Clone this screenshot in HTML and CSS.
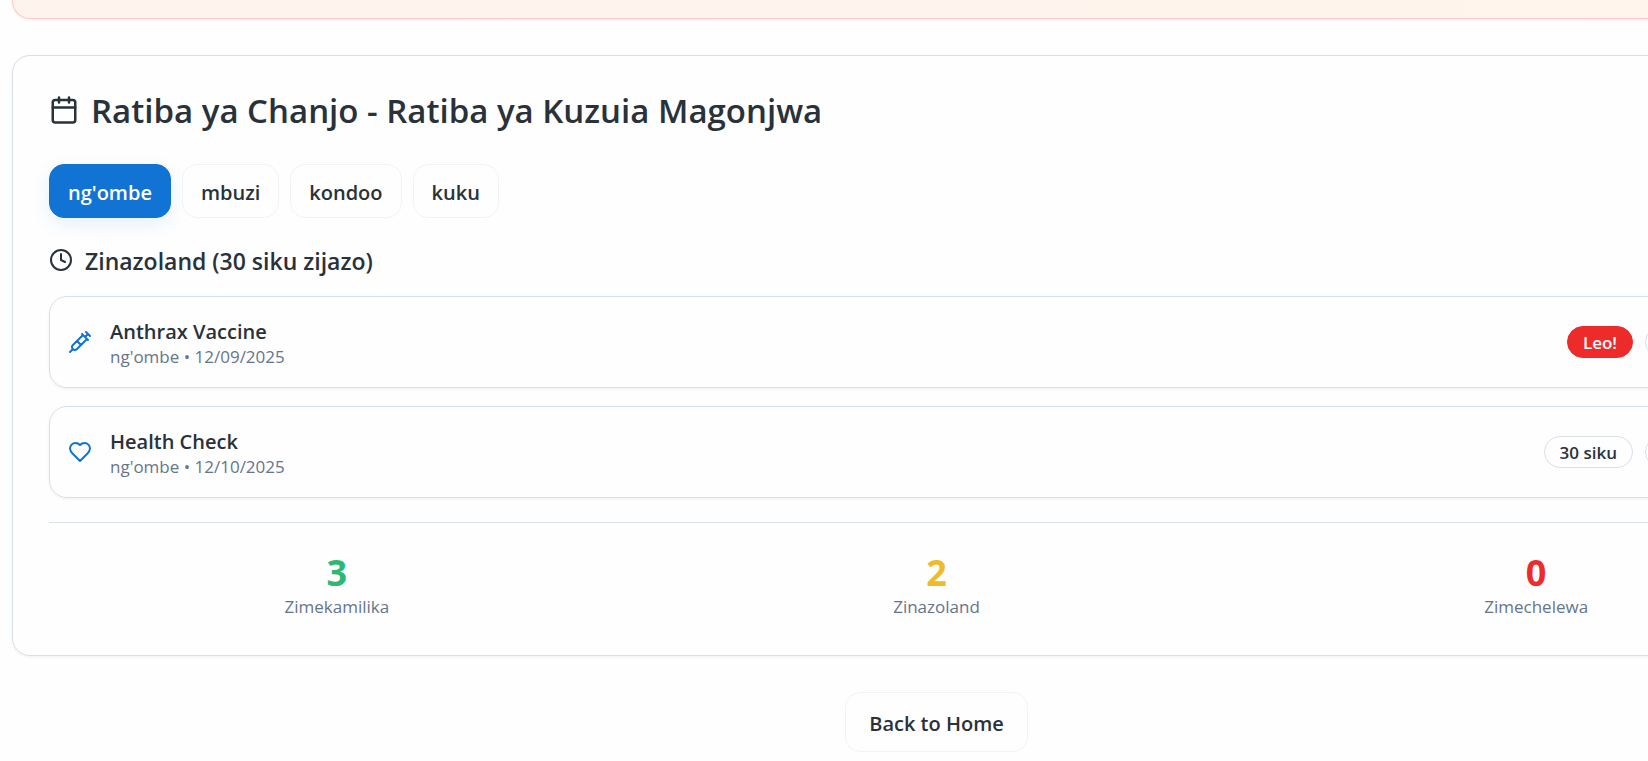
FILE: index.html
```html
<!DOCTYPE html>
<html lang="sw">
<head>
    <meta charset="UTF-8">
    <meta name="viewport" content="width=device-width, initial-scale=1.0">
    <title>Ratiba ya Chanjo</title>
    <link rel="stylesheet" href="styles.css">
</head>
<body>
    <main class="container">
        <div class="alert-card"></div>

        <!-- Vaccination schedule -->
        <section class="card">
            <h1 class="card-title">
                <svg class="icon icon-lg" viewBox="0 0 24 24"><path d="M8 2v4M16 2v4M3 10h18"/><rect x="3" y="4" width="18" height="18" rx="2"/></svg>
                <span>Ratiba ya Chanjo - Ratiba ya Kuzuia Magonjwa</span>
            </h1>

            <div class="tabs">
                <button class="btn active" type="button">ng'ombe</button>
                <button class="btn" type="button">mbuzi</button>
                <button class="btn" type="button">kondoo</button>
                <button class="btn" type="button">kuku</button>
            </div>

            <h2 class="section-title">
                <svg class="icon" viewBox="0 0 24 24"><circle cx="12" cy="12" r="10"/><path d="M12 6v6l4 2"/></svg>
                <span>Zinazoland (30 siku zijazo)</span>
            </h2>

            <div class="events">
                <div class="event">
                    <svg class="icon icon-blue" viewBox="0 0 24 24"><path d="m18 2 4 4M17 7l3-3M19 9 8.700 19.300c-1 1-2.500 1-3.400 0l-.6-.6c-1-1-1-2.500 0-3.400L15 5M9 11l4 4M5 19l-3 3M14 4l6 6"/></svg>
                    <div class="event-info">
                        <p class="event-name">Anthrax Vaccine</p>
                        <p class="muted">ng'ombe • 12/09/2025</p>
                    </div>
                    <span class="badge badge-red">Leo!</span>
                    <span class="badge badge-wide"></span>
                </div>
                <div class="event">
                    <svg class="icon icon-blue" viewBox="0 0 24 24"><path d="M19 14c1.490-1.460 3-3.210 3-5.500A5.500 5.500 0 0 0 16.500 3c-1.760 0-3 .5-4.500 2-1.500-1.500-2.740-2-4.500-2A5.500 5.500 0 0 0 2 8.500c0 2.300 1.500 4.050 3 5.500l7 7Z"/></svg>
                    <div class="event-info">
                        <p class="event-name">Health Check</p>
                        <p class="muted">ng'ombe • 12/10/2025</p>
                    </div>
                    <span class="badge">30 siku</span>
                    <span class="badge badge-wide"></span>
                </div>
            </div>

            <!-- Totals -->
            <div class="stats">
                <div>
                    <div class="stat-value green">3</div>
                    <div class="muted">Zimekamilika</div>
                </div>
                <div>
                    <div class="stat-value yellow">2</div>
                    <div class="muted">Zinazoland</div>
                </div>
                <div>
                    <div class="stat-value red">0</div>
                    <div class="muted">Zimechelewa</div>
                </div>
            </div>
        </section>

        <div class="footer">
            <button class="btn btn-lg" type="button">Back to Home</button>
        </div>
    </main>
</body>
</html>
```
FILE: styles.css
```css
* {
    box-sizing: border-box;
}
body {
    font-family: 'Segoe UI', 'Open Sans', 'Noto Sans', sans-serif;
    font-size: 20px;
    line-height: 25px;
    margin: 0;
    background: #fefefe;
    color: #29323a;
    overflow: hidden;
}
h1, h2, p {
    margin: 0;
}
/* content runs past the right edge of the window */
.container {
    margin: 0 -213px 0 12px;
}
.alert-card {
    height: 19px;
    border: 1px solid #ffc9c9;
    border-top: none;
    border-radius: 0 0 18px 18px;
    background: linear-gradient(to right, #fff3ee, #fff5ec);
    box-shadow: 0 1px 3px rgba(0,0,0,0.06);
    margin-bottom: 36px;
}
.card {
    padding: 36px;
    border: 1px solid #d9e0e8;
    border-radius: 18px;
    background: #fefefe;
    box-shadow: 0 1px 3px rgba(0,0,0,0.06);
}
.card-title {
    display: flex;
    align-items: center;
    gap: 12px;
    font-size: 33px;
    font-weight: 600;
    line-height: 34px;
    margin-bottom: 36px;
}
.card-title span,
.section-title span {
    padding-top: 2px;
}
.icon {
    flex: none;
    width: 24px;
    height: 24px;
    fill: none;
    stroke: currentColor;
    stroke-width: 2;
    stroke-linecap: round;
    stroke-linejoin: round;
}
.icon-lg {
    width: 30px;
    height: 30px;
}
.icon-blue {
    color: #1173d4;
}
.tabs {
    display: flex;
    gap: 11px;
    margin-bottom: 29px;
}
.btn {
    height: 54px;
    padding: 2px 18px 0;
    border: 1px solid #f1f4f7;
    border-radius: 15px;
    background: #fefefe;
    color: inherit;
    font-family: inherit;
    font-size: 20px;
    font-weight: 600;
    cursor: pointer;
}
.btn.active {
    background: #1173d4;
    border-color: #1173d4;
    color: white;
    box-shadow: 0 6px 18px rgba(17,115,212,0.1);
}
.btn-lg {
    height: 60px;
    padding: 2px 23px 0;
}
.section-title {
    display: flex;
    align-items: center;
    gap: 12px;
    font-size: 23px;
    font-weight: 600;
    line-height: 24px;
    margin-bottom: 23px;
}
.events {
    display: flex;
    flex-direction: column;
    gap: 18px;
}
.event {
    display: flex;
    align-items: center;
    padding: 18px;
    border: 1px solid #d9e0e8;
    border-radius: 18px;
    box-shadow: 0 1px 3px rgba(0,0,0,0.06);
}
.event-info {
    flex: 1;
    margin-left: 18px;
    padding-top: 4px;
}
.event-name {
    font-weight: 600;
}
.muted {
    color: #65758b;
    font-size: 17px;
}
.badge {
    height: 32px;
    padding: 0 15px;
    border: 1px solid #d9e0e8;
    border-radius: 16px;
    font-size: 17px;
    font-weight: 600;
    line-height: 31px;
    margin-left: 12px;
}
.badge-red {
    background: #ee2b2b;
    border-color: #ee2b2b;
    color: white;
}
.badge-wide {
    width: 160px;
}
.stats {
    display: grid;
    grid-template-columns: repeat(3, 1fr);
    gap: 24px;
    margin-top: 24px;
    padding-top: 32px;
    border-top: 1px solid #d9e0e8;
    text-align: center;
}
.stat-value {
    font-size: 36px;
    font-weight: 700;
    line-height: 36px;
    margin-bottom: 3px;
}
.green { color: #2eb873; }
.yellow { color: #efbb2a; }
.red { color: #ee2b2b; }
.footer {
    display: flex;
    justify-content: center;
    margin-top: 36px;
}
```
